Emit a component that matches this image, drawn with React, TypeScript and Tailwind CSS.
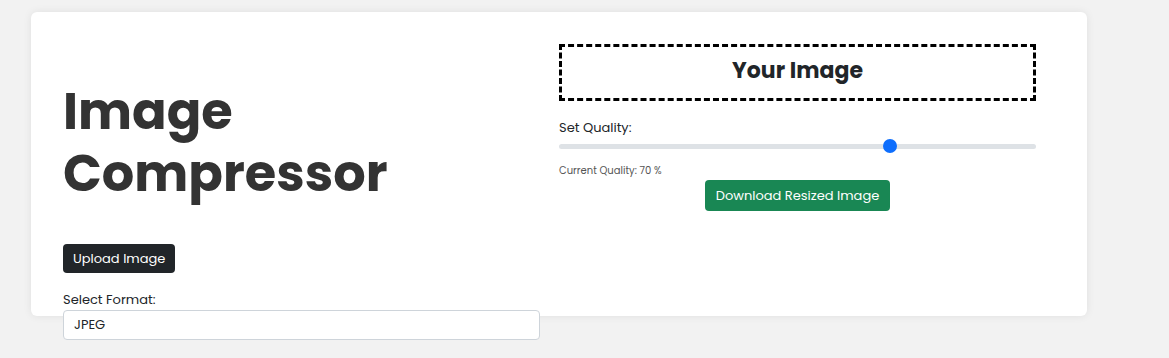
import { useState } from "react";

// Image compressor panel: left = title + upload/format, right = preview box + quality slider
export default function App() {
  const [quality] = useState(70);
  const [format] = useState("JPEG");

  return (
    <div
      className="min-h-[358px] w-full bg-[#f2f2f2] pl-[31px] pt-[12px] text-[#212529]"
      style={{ fontFamily: '"Poppins", "Open Sans", "Noto Sans", sans-serif' }}
    >
      <div className="h-[304px] w-[1056px] rounded-[6px] bg-white px-[32px] shadow-[0_0_8px_rgba(0,0,0,0.08)]">
        <div className="grid grid-cols-[477px_477px] gap-x-[19px]">
          {/* left column */}
          <div className="flex flex-col items-start pt-[68px]">
            <h1 className="text-[51px] font-bold leading-[62px] text-[#333]">
              Image
              <br />
              Compressor
            </h1>
            <button className="mt-[40px] h-[29px] rounded-[4px] bg-[#212529] px-[10px] text-[13px] text-white">
              Upload Image
            </button>
            <label className="mt-[16px] text-[13px] leading-[21px]">Select Format:</label>
            <div className="flex h-[30px] w-full items-center rounded-[4px] border border-[#ced4da] bg-white px-[10px] text-[13px]">
              {format}
            </div>
          </div>

          {/* right column */}
          <div className="flex flex-col pt-[32px]">
            <div className="flex h-[57px] items-center justify-center border-[3px] border-dashed border-black pb-[4px]">
              <h2 className="text-[22px] font-bold text-[#212529]">Your Image</h2>
            </div>
            <div className="mt-[16px] text-[13px] leading-[21px]">Set Quality:</div>
            <QualitySlider value={quality} />
            <div className="mt-[10px] text-[10px] leading-[14px] text-[#555]">
              Current Quality: {quality} %
            </div>
            <div className="mt-[2px] flex justify-center">
              <button className="h-[31px] rounded-[4px] bg-[#198754] px-[11px] text-[13px] text-white">
                Download Resized Image
              </button>
            </div>
          </div>
        </div>
      </div>
    </div>
  );
}

function QualitySlider({ value }: { value: number }) {
  return (
    <div className="flex h-[16px] items-center">
      <div className="relative h-[5px] w-full rounded-full bg-[#dee2e6]">
        <div
          className="absolute top-1/2 h-[14px] w-[14px] -translate-y-1/2 rounded-full bg-[#0d6efd]"
          style={{ left: `calc((100% - 14px) * ${value / 100})` }}
        />
      </div>
    </div>
  );
}
